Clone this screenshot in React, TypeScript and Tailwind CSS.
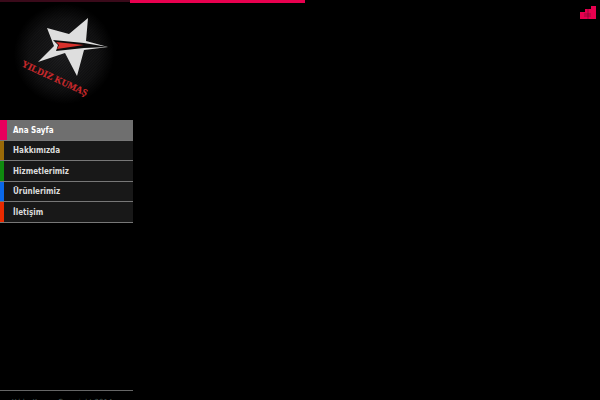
const menu = [
  { label: "Ana Sayfa", color: "bg-[#e8005c]", active: true },
  { label: "Hakkımızda", color: "bg-[#9a6a08]" },
  { label: "Hizmetlerimiz", color: "bg-[#0f8a0f]" },
  { label: "Ürünlerimiz", color: "bg-[#0a68e8]" },
  { label: "İletişim", color: "bg-[#e82a00]" },
];

function Logo() {
  return (
    <svg width="133" height="118" viewBox="0 0 133 118" className="block">
      <defs>
        <radialGradient id="disc" cx="50%" cy="50%" r="50%">
          <stop offset="0%" stopColor="#222224" />
          <stop offset="70%" stopColor="#131314" />
          <stop offset="100%" stopColor="#000000" />
        </radialGradient>
        <pattern id="weave" width="2" height="2" patternUnits="userSpaceOnUse" patternTransform="rotate(45)">
          <rect width="1" height="2" fill="#000000" opacity="0.35" />
        </pattern>
      </defs>
      <circle cx="64" cy="54" r="50" fill="url(#disc)" />
      <circle cx="64" cy="54" r="50" fill="url(#weave)" />
      <polygon
        points="88,18 86,41 108,47 84,50 77,76 65,53 38,62 54,46 47,28 69,34"
        fill="#dedede"
      />
      <polygon points="53,40 84,43 108,47 84,48 56,51 58,45" fill="#0c0c0c" />
      <polygon points="56,42 84,45 57,49 59,45" fill="#d8312c" />
      <text
        x="21"
        y="66"
        fill="#c9292c"
        fontSize="9.5"
        fontWeight="700"
        fontFamily="'Liberation Serif', serif"
        stroke="#c9292c"
        strokeWidth="0.2"
        transform="rotate(25 21 66)"
      >
        YILDIZ KUMAŞ
      </text>
    </svg>
  );
}

export default function App() {
  return (
    <div className="relative flex h-[400px] w-[600px] overflow-hidden bg-black font-['DejaVu_Sans',sans-serif]">
      <aside className="flex w-[133px] shrink-0 flex-col">
        <div className="h-[2px] w-[130px] bg-[#3a0a1a]" />
        <div className="h-[118px] -mt-[2px]">
          <Logo />
        </div>
        <div className="h-[2px]" />
        <nav className="flex flex-col">
          {menu.map((item) => (
            <a
              key={item.label}
              className={`flex h-[20.5px] items-stretch border-b border-[#777] ${item.active ? "bg-[#6f6f6f] text-white" : "bg-[#181818] text-[#dcdcdc]"}`}
            >
              <span className={`${item.active ? "w-[7px]" : "w-1"} ${item.color}`} />
              <span className={`flex items-center pt-[2px] font-['DejaVu_Sans_Condensed','DejaVu_Sans',sans-serif] text-[8px] font-bold ${item.active ? "pl-[6px]" : "pl-[9px]"}`}>
                {item.label}
              </span>
            </a>
          ))}
        </nav>
        <div className="mt-auto h-[10px] overflow-hidden border-t border-[#666]">
          <p className="whitespace-nowrap pl-3 pt-[6px] text-[7px] text-[#4a5a58]">
            Yıldız Kumaş Copyright 2014
          </p>
        </div>
      </aside>
      <main className="flex-1">
        <div className="flex items-start justify-between">
          <div className="-ml-[3px] h-[3px] w-[175px] bg-[#e8004f]" />
          <svg width="16" height="14" viewBox="0 0 16 14" className="mr-[4px] mt-[6px]">
            <path d="M0 6h5V3h6V0h5v13H0z" fill="#e8004f" />
            <path d="M4 8h7M4 10h7M8 3v10" stroke="#7a0a30" strokeWidth="0.7" />
          </svg>
        </div>
      </main>
    </div>
  );
}
